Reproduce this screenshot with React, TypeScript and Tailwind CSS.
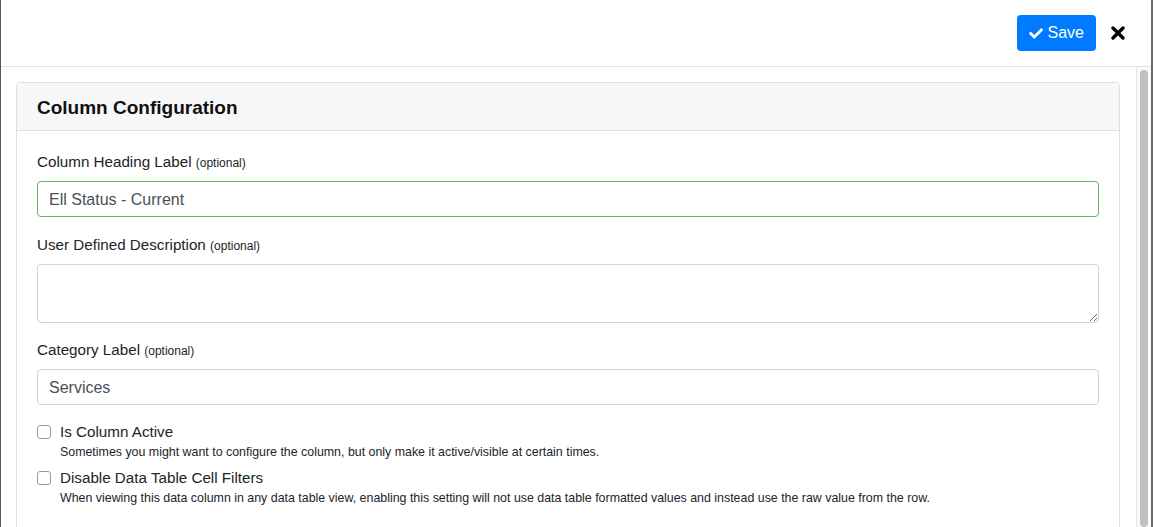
import React from 'react';

const font = { fontFamily: '"Liberation Sans", Arial, sans-serif' };

function Field({ label, value, multiline, valid, gap = 'mb-[16px]' }: { label: string; value?: string; multiline?: boolean; valid?: boolean; gap?: string }) {
  const base =
    'w-full rounded-[4px] border bg-white px-[11px] text-[16px] text-[#495057] outline-none';
  return (
    <div className={gap}>
      <label className="mb-[8px] block h-[22px] text-[15.2px] leading-[22px] text-[#212529]">
        {label} <span className="text-[12px]">(optional)</span>
      </label>
      {multiline ? (
        <textarea
          className={`${base} block h-[59px] border-[#ced4da] py-[6px]`}
          defaultValue=""
        />
      ) : (
        <input
          className={`${base} block h-[36px] pt-[1px] ${valid ? 'border-[#5cb85c]' : 'border-[#ced4da]'}`}
          defaultValue={value}
        />
      )}
    </div>
  );
}

function Check({ label, help }: { label: string; help: string }) {
  return (
    <div className="flex flex-col">
      <div className="flex h-[22px] items-center">
        <span className="mr-[9px] inline-block h-[14px] w-[14px] shrink-0 rounded-[3px] border border-[#9a9a9a] bg-white" />
        <span className="text-[15.2px] text-[#212529]">{label}</span>
      </div>
      <div className="pl-[23px] text-[12.4px] leading-[19px] text-[#212529]">{help}</div>
    </div>
  );
}

export default function App() {
  return (
    <div className="flex h-[527px] w-[1153px] overflow-hidden bg-white" style={font}>
      <div className="w-[1px] bg-[#5a5a5a]" />
      <div className="flex min-w-0 flex-1 flex-col">
        <div className="flex h-[67px] shrink-0 items-center justify-end border-b border-[#dee2e6] pr-[26px]">
          <button className="flex h-[36px] items-center gap-[5px] rounded-[4px] bg-[#007bff] pl-[12px] pr-[12px] text-[16px] text-white">
            <svg width="14" height="12" viewBox="0 0 512 420" fill="white">
              <path d="M173.9 411.4L7.5 245c-10-10-10-26.2 0-36.2l36.2-36.2c10-10 26.2-10 36.2 0L192 284.7 432.1 44.6c10-10 26.2-10 36.2 0l36.2 36.2c10 10 10 26.2 0 36.2L210.1 411.4c-10 10-26.2 10-36.2 0z" />
            </svg>
            Save
          </button>
          <svg className="ml-[15px]" width="14" height="14" viewBox="0 0 14 14">
            <path d="M2 2L12 12M12 2L2 12" stroke="black" strokeWidth="3.4" strokeLinecap="round" />
          </svg>
        </div>
        <div className="flex min-h-0 flex-1">
          <div className="min-w-0 flex-1 p-[15px] pr-[16px]">
            <div className="rounded-[4px] border border-[#dfdfdf]">
              <div className="flex h-[48px] items-center rounded-t-[4px] border-b border-[#dfdfdf] bg-[#f7f7f7] px-[20px] pt-[3px]">
                <h2 className="text-[19px] font-bold text-[#111]">Column Configuration</h2>
              </div>
              <div className="px-[20px] pt-[20px] pb-[60px]">
                <Field label="Column Heading Label" value="Ell Status - Current" valid gap="mb-[17px]" />
                <Field label="User Defined Description" multiline />
                <Field label="Category Label" value="Services" />
                <div className="flex flex-col gap-[5px]">
                  <Check
                    label="Is Column Active"
                    help="Sometimes you might want to configure the column, but only make it active/visible at certain times."
                  />
                  <Check
                    label="Disable Data Table Cell Filters"
                    help="When viewing this data column in any data table view, enabling this setting will not use data table formatted values and instead use the raw value from the row."
                  />
                </div>
              </div>
            </div>
          </div>
          <div className="flex w-[15px] justify-center border-l border-[#e6e6e6] bg-[#fafafa] pt-[3px]">
            <div className="w-[8px] rounded-full bg-[#c1c1c1]" />
          </div>
        </div>
      </div>
      <div className="w-[2px] bg-[#6a6a6a]" />
    </div>
  );
}
